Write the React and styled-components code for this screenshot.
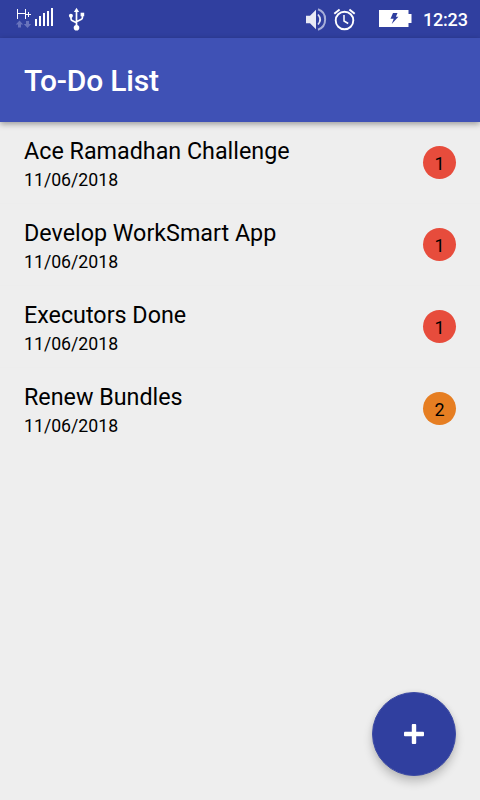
import React from "react";
import styled, { createGlobalStyle } from "styled-components";

const GlobalStyle = createGlobalStyle`
  * { box-sizing: border-box; }
  body { margin: 0; background: #eeeeee; font-family: Roboto, sans-serif; }
`;

const Screen = styled.div`
  position: relative;
  display: flex;
  flex-direction: column;
  width: 480px;
  height: 800px;
  overflow: hidden;
  background: #eeeeee;
`;

const StatusBar = styled.header`
  display: flex;
  justify-content: space-between;
  height: 38px;
  padding: 0 12px 0 14px;
  background: #303f9f;
  color: #fff;
`;

const StatusGroup = styled.div`
  display: flex;
  height: 38px;
`;

const StatusIcon = styled.svg`
  display: block;
  flex: none;
  height: 38px;
`;

const Clock = styled.span`
  width: 45px;
  margin-left: 9px;
  font-size: 18px;
  font-weight: 500;
  letter-spacing: -0.2px;
  line-height: 39px;
`;

const Toolbar = styled.div`
  display: flex;
  align-items: center;
  flex: none;
  height: 84px;
  padding: 2px 24px 0;
  background: #3f51b5;
  box-shadow: 0 2px 6px rgba(0, 0, 0, 0.36);
  z-index: 1;
`;

const Title = styled.h1`
  margin: 0;
  color: #fff;
  font-size: 30px;
  font-weight: 500;
  letter-spacing: -0.2px;
  line-height: 36px;
`;

const TaskList = styled.ul`
  margin: 0;
  padding: 0;
  list-style: none;
`;

const TaskRow = styled.li`
  display: flex;
  justify-content: space-between;
  align-items: center;
  height: 82px;
  padding: 0 24px;
  border-bottom: 1px solid #ededed;

  &:last-child {
    border-color: transparent;
  }
`;

const TaskText = styled.div`
  display: flex;
  flex-direction: column;
  padding-top: 2px;
  color: #000;
`;

const TaskName = styled.span`
  font-size: 23.3px;
  line-height: 32px;
`;

const TaskDate = styled.time`
  font-size: 17.700px;
  line-height: 26px;
`;

const Priority = styled.span`
  display: flex;
  align-items: center;
  justify-content: center;
  width: 33px;
  height: 33px;
  padding-top: 2px;
  border-radius: 50%;
  background: ${(p) => p.$color};
  color: #000;
  font-size: 18px;
`;

const AddButton = styled.button`
  position: absolute;
  right: 24px;
  bottom: 24px;
  display: flex;
  align-items: center;
  justify-content: center;
  width: 84px;
  height: 84px;
  padding: 0;
  border: 1px solid #3c4aa4;
  border-radius: 50%;
  background: #303f9f;
  box-shadow: 0 6px 10px rgba(0, 0, 0, 0.2), 0 0 5px rgba(0, 0, 0, 0.08);
`;

const tasks = [
  { name: "Ace Ramadhan Challenge", date: "11/06/2018", priority: 1 },
  { name: "Develop WorkSmart App", date: "11/06/2018", priority: 1 },
  { name: "Executors Done", date: "11/06/2018", priority: 1 },
  { name: "Renew Bundles", date: "11/06/2018", priority: 2 },
];

const priorityColors = { 1: "#e74c3c", 2: "#e67e22" };

const SignalIcon = () => (
  <StatusIcon width="42" viewBox="14 0 42 38" fill="#fff">
    <path d="M17 9h1v4h7V9h1v10h-1v-5h-7v5h-1z" />
    <path d="M26 14h5v1h-5zM28 12h1v5h-1z" />
    <path d="M19.500 20.500l3.700 4h-2.200v3h-3v-3h-2.200zM27.500 28l-3.700-4h2.200v-3h3v3h2.200z" fill="#6873bc" />
    <path d="M35 19h2v7h-2zM39 16h2v10h-2zM43 13h2v13h-2zM47 11h2v15h-2zM51 8h2v18h-2z" />
  </StatusIcon>
);

const UsbIcon = () => (
  <StatusIcon width="32" viewBox="56 0 32 38" fill="#fff">
    <path d="M76.500 7.800l2.600 4.200h-5.200z" />
    <circle cx="76.500" cy="27.800" r="2.800" />
    <circle cx="70.900" cy="15.800" r="2" />
    <path d="M80.600 12.700h3.600v3.600h-3.600z" />
    <path d="M76.500 11v16M71 16v2.800q0 1.200 1 1.700l4.500 2.300M82.400 15v2.800q0 1-1 1.500l-4.900 2.400" fill="none" stroke="#fff" strokeWidth="1.700" />
  </StatusIcon>
);

const VolumeIcon = () => (
  <StatusIcon width="28" viewBox="304 0 28 38">
    <path d="M306 15.800h4l6-6v19.400l-6-6h-4z" fill="#e8eaf5" />
    <path d="M318 14.500q4.400 5 0 10" fill="none" stroke="#e1e4f2" strokeWidth="1.700" />
    <path d="M318 9.300c9.500 3.200 9.500 17.200 0 20.400" fill="none" stroke="#a7afd9" strokeWidth="2" />
  </StatusIcon>
);

const AlarmIcon = () => (
  <StatusIcon width="26" viewBox="332 0 26 38" fill="none" stroke="#fff">
    <circle cx="344.500" cy="20.500" r="8.800" strokeWidth="1.900" />
    <path d="M334.300 13.800l5.300-4.300M349.400 9.500l5.300 4.300" strokeWidth="2" />
    <path d="M344 15v6l4.200 2.500" strokeWidth="1.500" />
  </StatusIcon>
);

const BatteryIcon = () => (
  <StatusIcon width="56" viewBox="358 0 56 38">
    <path d="M379 10h29.500v4h3v9h-3v4H379z" fill="#fff" />
    <path d="M393 13h4.500l-1.600 3.700h2.500l-6.700 7.300 2-5.200h-3.200z" fill="#303f9f" />
  </StatusIcon>
);

const PlusIcon = () => (
  <svg width="20" height="20" viewBox="0 0 20 20" fill="#fff">
    <rect x="7.800" y="0" width="4.400" height="20" rx="0.900" />
    <rect x="0" y="7.800" width="20" height="4.400" rx="0.900" />
  </svg>
);

export default function App() {
  return (
    <Screen>
      <GlobalStyle />
      <StatusBar>
        <StatusGroup>
          <SignalIcon />
          <UsbIcon />
        </StatusGroup>
        <StatusGroup>
          <VolumeIcon />
          <AlarmIcon />
          <BatteryIcon />
          <Clock>12:23</Clock>
        </StatusGroup>
      </StatusBar>
      <Toolbar>
        <Title>To-Do List</Title>
      </Toolbar>
      <TaskList>
        {tasks.map((task) => (
          <TaskRow key={task.name}>
            <TaskText>
              <TaskName>{task.name}</TaskName>
              <TaskDate>{task.date}</TaskDate>
            </TaskText>
            <Priority $color={priorityColors[task.priority]}>{task.priority}</Priority>
          </TaskRow>
        ))}
      </TaskList>
      <AddButton aria-label="Add task">
        <PlusIcon />
      </AddButton>
    </Screen>
  );
}
